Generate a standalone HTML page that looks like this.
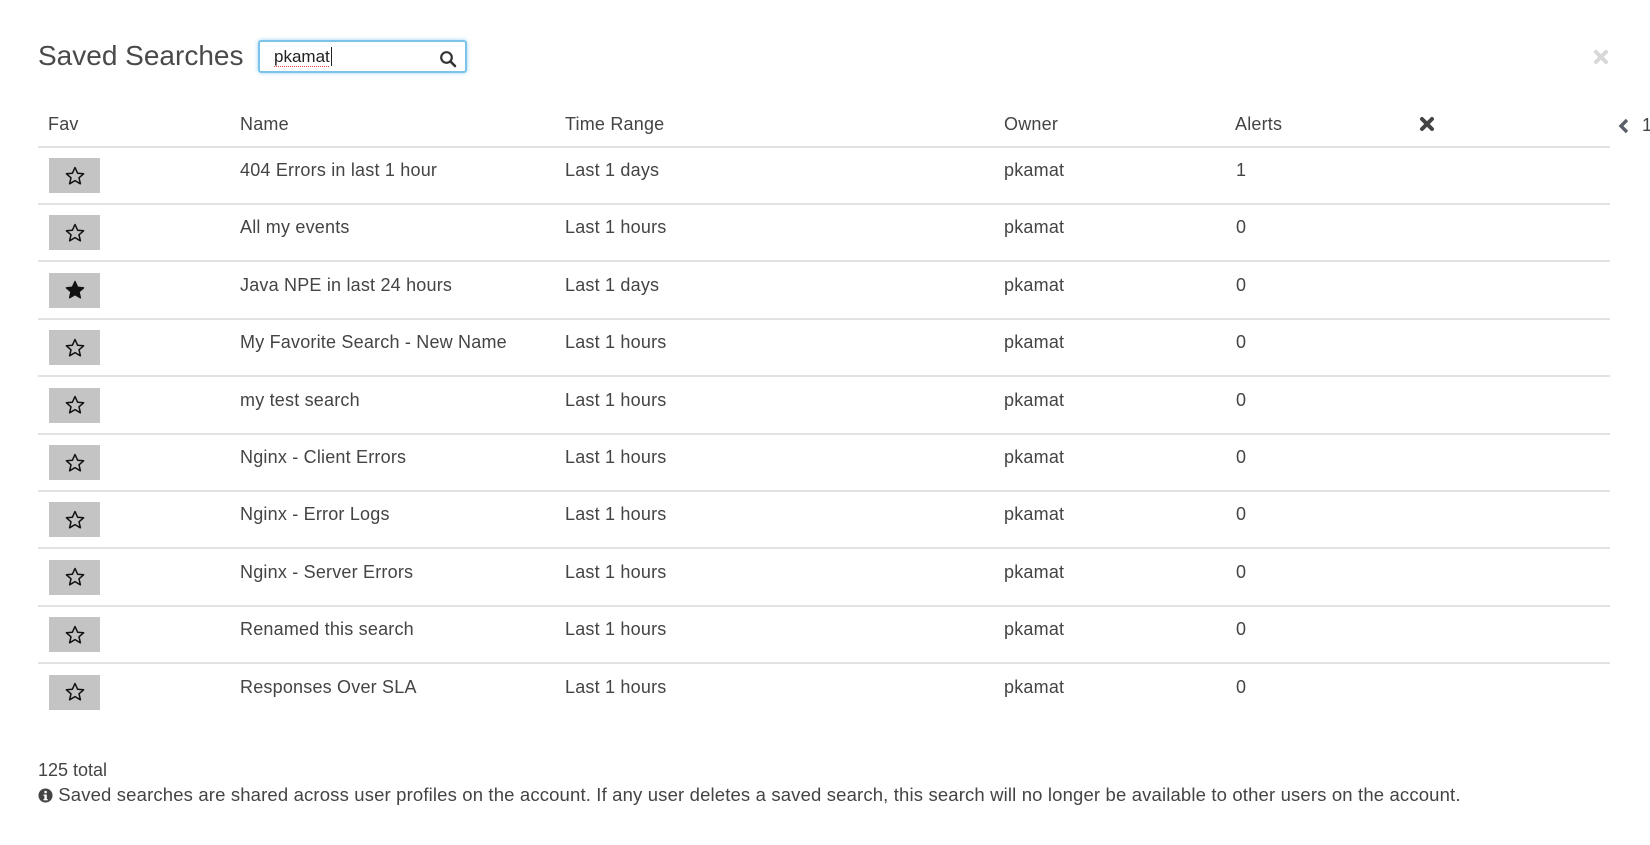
<!DOCTYPE html>
<html><head><meta charset="utf-8"><style>
*{margin:0;padding:0;box-sizing:border-box}
body{width:1650px;height:845px;background:#fff;font-family:"Liberation Sans",sans-serif;color:#444;position:relative;overflow:hidden}
.a{position:absolute;white-space:nowrap}
.t{font-size:18px;line-height:20px;letter-spacing:0.2px}
.line{position:absolute;left:38px;width:1572px;height:2px;background:#e2e2e2}
.star{position:absolute;left:49px;width:51px;height:35px;background:#c4c4c4;display:flex;align-items:center;justify-content:center}
</style></head><body>
<div class="a" style="left:38px;top:40px;font-size:28px;color:#4a4a4a">Saved Searches</div>
<div class="a" style="left:258px;top:40px;width:209px;height:33px;border:2px solid #7cc3ea;border-radius:3px;box-shadow:0 0 4px #9fd3f0"></div>
<div class="a" style="left:274px;top:47px;font-size:17px;color:#222">pkamat<span style="border-left:1px solid #222;margin-left:1px"></span></div>
<div class="a" style="left:274px;top:66px;width:55px;border-top:1px dotted #e44"></div>
<svg class="a" style="left:439px;top:50px" width="18" height="18" viewBox="0 0 18 18"><circle cx="7.5" cy="7.5" r="5.3" fill="none" stroke="#333" stroke-width="2.2"/><line x1="11.5" y1="11.5" x2="16" y2="16" stroke="#333" stroke-width="2.6" stroke-linecap="round"/></svg>
<svg class="a" style="left:1593px;top:49px" width="16" height="16" viewBox="0 0 16 16"><path d="M3 3L13 13M13 3L3 13" stroke="#d8d8d8" stroke-width="4" stroke-linecap="round"/></svg>

<div class="a t" style="left:48px;top:114px">Fav</div>
<div class="a t" style="left:240px;top:114px">Name</div>
<div class="a t" style="left:565px;top:114px">Time Range</div>
<div class="a t" style="left:1004px;top:114px">Owner</div>
<div class="a t" style="left:1235px;top:114px">Alerts</div>
<svg class="a" style="left:1419px;top:116px" width="16" height="16" viewBox="0 0 16 16"><path d="M3 3L13 13M13 3L3 13" stroke="#444" stroke-width="4" stroke-linecap="round"/></svg>
<svg class="a" style="left:1617px;top:117px" width="14" height="18" viewBox="0 0 14 18"><path d="M10 3L4 9L10 15" fill="none" stroke="#5a5f6a" stroke-width="3.4"/></svg>
<div class="a t" style="left:1642px;top:115px">1</div>
<div class="line" style="top:146px"></div>

<div id="rows"></div>
<script>
const d=[["404 Errors in last 1 hour","Last 1 days","1",0],["All my events","Last 1 hours","0",0],["Java NPE in last 24 hours","Last 1 days","0",1],["My Favorite Search - New Name","Last 1 hours","0",0],["my test search","Last 1 hours","0",0],["Nginx - Client Errors","Last 1 hours","0",0],["Nginx - Error Logs","Last 1 hours","0",0],["Nginx - Server Errors","Last 1 hours","0",0],["Renamed this search","Last 1 hours","0",0],["Responses Over SLA","Last 1 hours","0",0]];
let h="";
d.forEach((r,i)=>{const y=147+i*57.4;
const st=r[3]?'<path d="M10 1.5L12.6 7.2L18.6 7.8L14 11.8L15.4 17.8L10 14.6L4.6 17.8L6 11.8L1.4 7.8L7.4 7.2Z" fill="#111" stroke="#111" stroke-width="1.4" stroke-linejoin="round"/>':'<path d="M10 1.5L12.6 7.2L18.6 7.8L14 11.8L15.4 17.8L10 14.6L4.6 17.8L6 11.8L1.4 7.8L7.4 7.2Z" fill="none" stroke="#111" stroke-width="1.5" stroke-linejoin="round"/>';
h+=`<div class="star" style="top:${y+11}px"><svg width="20" height="20" viewBox="0 0 20 20">${st}</svg></div>
<div class="a t" style="left:240px;top:${y+13}px">${r[0]}</div>
<div class="a t" style="left:565px;top:${y+13}px">${r[1]}</div>
<div class="a t" style="left:1004px;top:${y+13}px">pkamat</div>
<div class="a t" style="left:1236px;top:${y+13}px">${r[2]}</div>`;
if(i<9)h+=`<div class="line" style="top:${y+56}px"></div>`;});
document.getElementById("rows").innerHTML=h;
</script>
<div class="a" style="left:38px;top:760px;font-size:18px">125 total</div>
<div class="a" style="left:38px;top:784px;font-size:18.5px;letter-spacing:0.15px"><svg width="15" height="15" viewBox="0 0 16 16" style="vertical-align:-2px"><circle cx="8" cy="8" r="7.5" fill="#444"/><rect x="6.8" y="7" width="2.6" height="6" fill="#fff"/><rect x="5.8" y="7" width="3.4" height="1.3" fill="#fff"/><rect x="5.8" y="11.8" width="4.6" height="1.3" fill="#fff"/><circle cx="8.1" cy="4.3" r="1.4" fill="#fff"/></svg> Saved searches are shared across user profiles on the account. If any user deletes a saved search, this search will no longer be available to other users on the account.</div>
</body></html>
